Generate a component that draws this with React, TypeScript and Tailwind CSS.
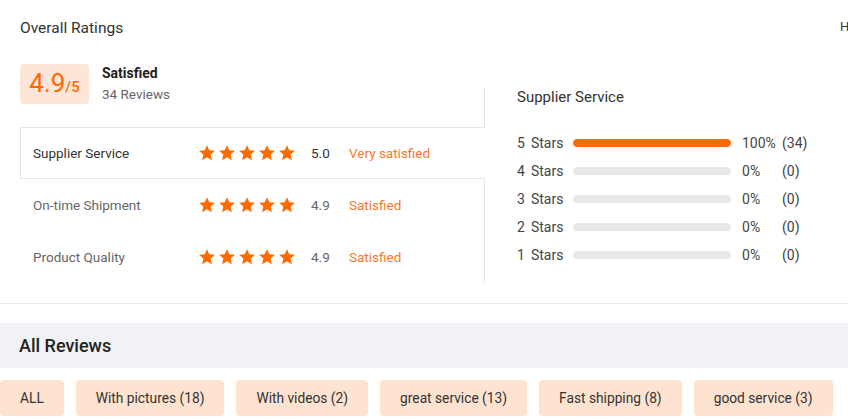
const scores = [
  { label: 'Supplier Service', value: '5.0', status: 'Very satisfied', active: true },
  { label: 'On-time Shipment', value: '4.9', status: 'Satisfied', active: false },
  { label: 'Product Quality', value: '4.9', status: 'Satisfied', active: false },
]

const breakdown = [
  { stars: 5, pct: 100, count: 34 },
  { stars: 4, pct: 0, count: 0 },
  { stars: 3, pct: 0, count: 0 },
  { stars: 2, pct: 0, count: 0 },
  { stars: 1, pct: 0, count: 0 },
]

const tags = ['ALL', 'With pictures (18)', 'With videos (2)', 'great service (13)', 'Fast shipping (8)', 'good service (3)']

const StarIcon = () => (
  <svg viewBox="0 0 24 24" className="h-[18px] w-[18px]" fill="#ff6a00">
    <polygon points="12,1.5 15.1,8.3 22.5,9.1 16.9,14.1 18.5,21.5 12,17.7 5.5,21.5 7.1,14.1 1.5,9.1 8.9,8.3" />
  </svg>
)

export default function App() {
  return (
    <div className="relative h-[419px] w-[848px] overflow-hidden bg-white font-['Roboto',sans-serif] text-[#333]">
      {/* cut off by the viewport edge in the original */}
      <span className="absolute left-[840px] top-[17px] whitespace-nowrap text-[13px] text-[#333]">Help</span>

      <div className="px-5 pt-[18px]">
        <h2 className="text-[15.5px] leading-5 text-[#333]">Overall Ratings</h2>

        <div className="flex">
          <div className="w-[464px]">
            <div className="mt-[25px] flex items-center">
              <div className="flex h-10 w-[69px] items-baseline justify-center rounded bg-[#fde6d8] pt-[3px] text-[#ff6a00]">
                <span className="text-[26px] leading-8">4.9</span>
                <span className="text-[15px] font-medium">/5</span>
              </div>
              <div className="ml-[13px]">
                <div className="text-[14px] font-bold leading-[21px] text-[#222]">Satisfied</div>
                <div className="text-[13.5px] leading-[21px] text-[#666]">34 Reviews</div>
              </div>
            </div>

            <div className="mt-[22px]">
              {scores.map((row) => (
                <div
                  key={row.label}
                  className={`relative flex h-[52px] items-center pl-3 text-[13.5px] ${
                    row.active ? 'z-10 -mr-px border-y border-l border-[#e6e6e6] bg-white' : 'border-l border-transparent'
                  }`}
                >
                  <span className={`w-[165px] ${row.active ? 'text-[#333]' : 'text-[#666]'}`}>{row.label}</span>
                  <div className="flex gap-[2px]">
                    {[0, 1, 2, 3, 4].map((i) => (
                      <StarIcon key={i} />
                    ))}
                  </div>
                  <span className={`ml-[15px] w-[38px] ${row.active ? 'text-[#333]' : 'text-[#666]'}`}>{row.value}</span>
                  <span className="text-[#f5782e]">{row.status}</span>
                </div>
              ))}
            </div>
          </div>

          <div className="mt-[49px] flex-1 border-l border-[#e6e6e6] pl-8">
            <h3 className="text-[15px] leading-5 text-[#333]">Supplier Service</h3>
            <div className="mt-[22px]">
              {breakdown.map((row) => (
                <div key={row.stars} className="flex h-7 items-center text-[14px] text-[#444]">
                  <div className="flex w-[56px]">
                    <span>{row.stars}</span>
                    <span className="ml-[6px]">Stars</span>
                  </div>
                  <div className="h-2 w-[158px] overflow-hidden rounded-full bg-[#e8e8e8]">
                    <div className="h-2 rounded-full bg-[#ff6a00]" style={{ width: `${row.pct}%` }} />
                  </div>
                  <span className="ml-[11px] w-[40px]">{row.pct}%</span>
                  <span>({row.count})</span>
                </div>
              ))}
            </div>
          </div>
        </div>
      </div>

      <div className="mt-5 h-px bg-[#e8e8e8]" />

      <div className="mt-[19px] flex h-[45px] items-center bg-[#f0f2f5] px-[19px]">
        <h2 className="text-[18px] font-medium text-[#222]">All Reviews</h2>
      </div>

      <div className="mt-3 flex gap-3">
        {tags.map((tag) => (
          <button key={tag} className="h-9 whitespace-nowrap rounded bg-[#fde3d0] px-5 text-[13.75px] text-[#333]">
            {tag}
          </button>
        ))}
      </div>
    </div>
  )
}
